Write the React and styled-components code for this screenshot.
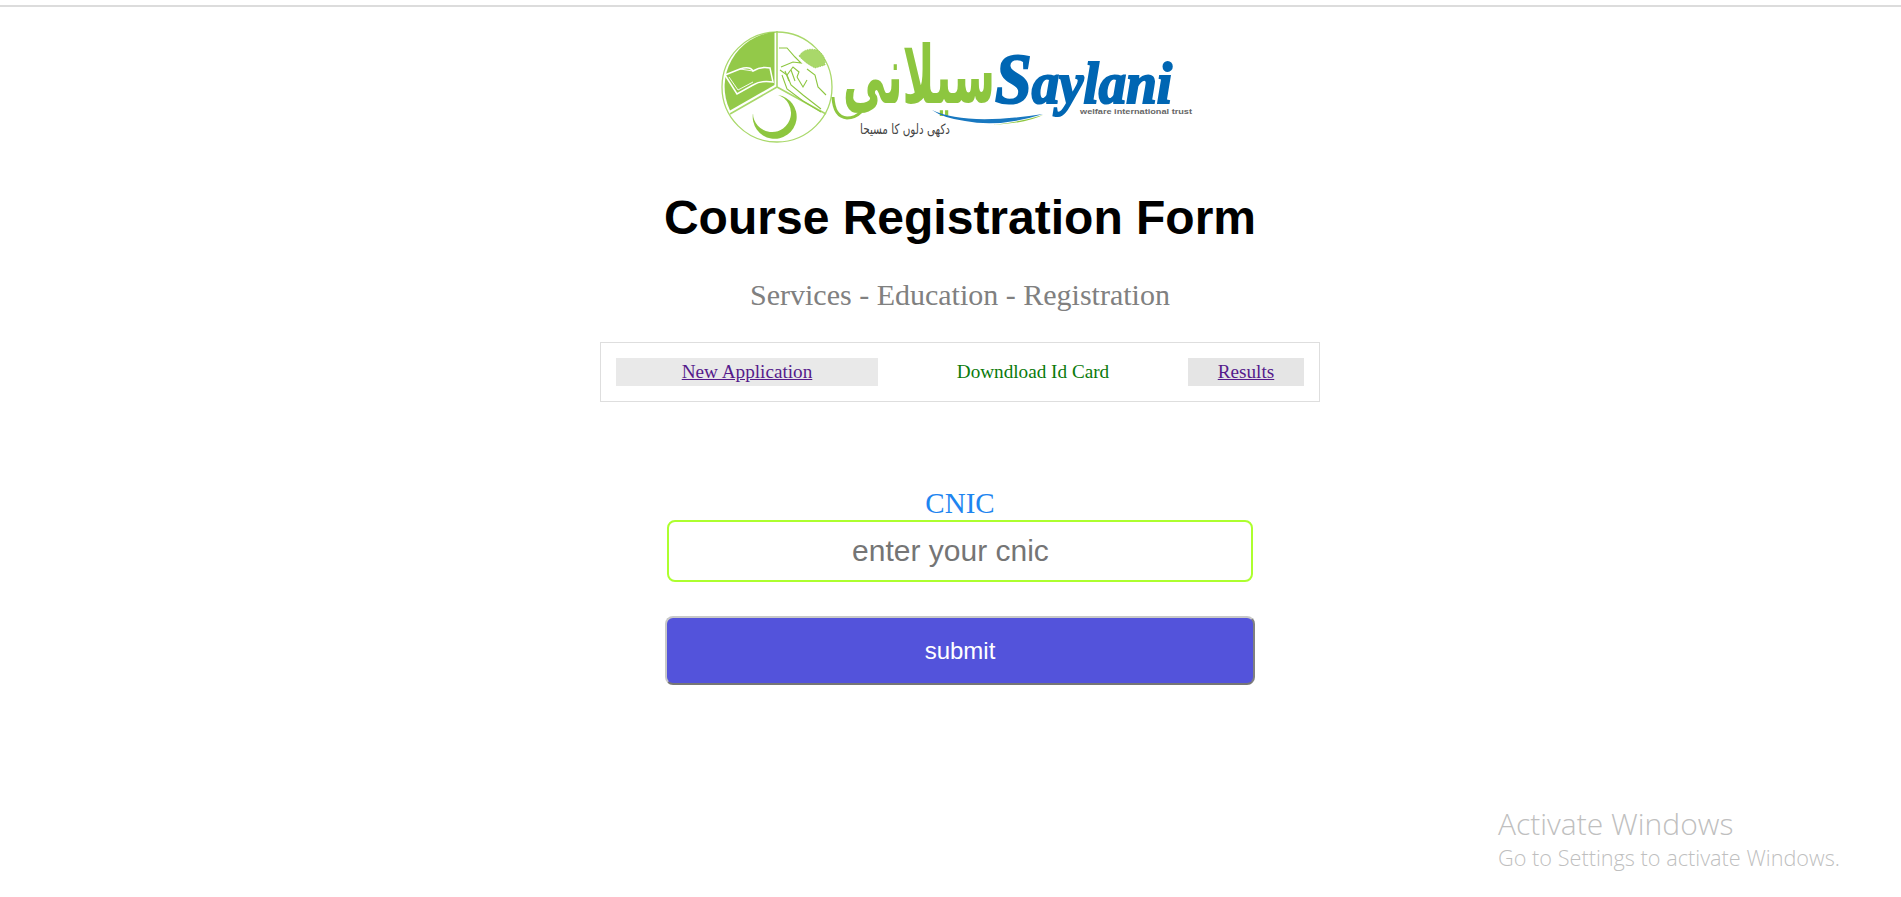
import React from "react";
import styled, { createGlobalStyle } from "styled-components";

const Global = createGlobalStyle`
  html, body { margin: 0; padding: 0; background: #fff; }
  body { font-family: "Liberation Serif", serif; overflow: hidden; }
`;

const Page = styled.div`
  position: relative;
  width: 1920px;
  height: 897px;
  padding-top: 5px;
  box-sizing: border-box;
  display: flex;
  flex-direction: column;
  align-items: center;
`;
const Rule = styled.div`
  width: 100%;
  height: 2px;
  background: #dcdcdc;
`;
const LogoSvg = styled.svg`
  display: block;
  width: 490px;
  height: 125px;
  margin-top: 18px;
`;
const Title = styled.h1`
  margin: 40px 0 0;
  font: bold 48px/56px "Liberation Sans", Arial, sans-serif;
  color: #000;
`;
const Subtitle = styled.h2`
  margin: 32px 0 0;
  font: normal 30px/34px "Liberation Serif", serif;
  color: #808080;
`;
const Nav = styled.nav`
  margin-top: 30px;
  width: 720px;
  height: 60px;
  box-sizing: border-box;
  border: 1px solid #dedede;
  padding: 0 15px;
  display: flex;
  align-items: center;
  justify-content: space-between;
  font-size: 19.2px;
`;
const NavLink = styled.a`
  display: block;
  width: ${(p) => p.$w}px;
  height: 28px;
  line-height: 28px;
  text-align: center;
  background: ${(p) => p.$bg};
  color: #551a8b;
  text-decoration: underline;
`;
const NavCurrent = styled.span`
  color: #0a7a0a;
  line-height: 28px;
`;
const Form = styled.form`
  margin-top: 84px;
  width: 591px;
  display: flex;
  flex-direction: column;
  align-items: center;
`;
const Label = styled.label`
  font-size: 29px;
  line-height: 34px;
  color: #1e85f0;
`;
const Input = styled.input`
  width: 586px;
  height: 62px;
  box-sizing: border-box;
  margin-right: 1px;
  padding: 0 18px 0 0;
  border: 2px solid #adff2f;
  border-radius: 8px;
  outline: none;
  text-align: center;
  font: 30px "Liberation Sans", Arial, sans-serif;
  background: #fff;
  &::placeholder { color: #757575; opacity: 1; }
`;
const Submit = styled.button`
  margin-top: 34px;
  width: 590px;
  height: 69px;
  box-sizing: border-box;
  border: 2px solid;
  border-color: #c8c8c8 #808080 #767676 #c8c8c8;
  border-radius: 8px;
  background: #5353db;
  color: #fff;
  font: 24px "Liberation Sans", Arial, sans-serif;
`;
const Watermark = styled.div`
  position: absolute;
  left: 1498px;
  top: 804px;
  color: #bfbfbf;
  font-family: "Open Sans", sans-serif;
  font-weight: 300;
`;
const WatermarkTitle = styled.div`
  font-size: 30px;
  line-height: 40px;
`;
const WatermarkText = styled.div`
  font-size: 21.7px;
  line-height: 28px;
`;

function Logo() {
  const g = "#8dc63f";
  const p = "#a9d86a";
  return (
    <LogoSvg viewBox="0 0 490 125" aria-label="Saylani logo">
      <circle cx="62" cy="62" r="55" fill="#fff" stroke={p} strokeWidth="1.3" />
      <path d="M59.5 7 A55 55 0 0 0 15 85.5 L59.5 60 Z" fill={g} opacity="0.95" />
      <path d="M62 6 V62 M62 62 L111 89 M62 62 L15 89" stroke={p} strokeWidth="1.6" fill="none" />
      <path d="M10 50 L25 44 Q35 41 38 46 Q46 41 55 43 L58 57 Q46 55 38 60 L22 69 Z" fill="none" stroke="#fff" strokeWidth="1.5" />
      <path d="M14 52 L23 65 L38 57 M25 44 L38 46" fill="none" stroke="#fff" strokeWidth="0.9" />
      <path d="M63 70 A22 22 0 1 1 38 88 A19 19 0 1 0 63 70 Z" fill={g} />
      <g fill="none" stroke={g} strokeWidth="1.1">
        <path d="M64 23 L72 23 L80 32 L86 38 L78 37 L66 42" />
        <path d="M65 45 L72 50 L78 42 L84 47 L82 52 M72 50 L76 60 L88 70 L106 84" />
        <path d="M67 50 L72 64 L88 76 L106 87" />
        <path d="M92 44 L100 50 L103 62 L111 70" />
        <path d="M82 52 L88 62 L92 55 M76 45 L80 56 M70 46 L74 56" />
      </g>
      <path d="M84 31 Q90 22 102 25 Q111 30 110 40 L100 43 Q90 38 84 31 Z" fill={p} stroke={g} strokeWidth="0.7" strokeDasharray="1.5 1" />
      <path d="M118 72 Q119 92 132 93 Q140 93 146 87" fill="none" stroke={g} strokeWidth="3" />
      <text x="280" y="78" fontFamily="DejaVu Sans, sans-serif" fontWeight="bold" fontSize="80" fill={g} textLength="152" lengthAdjust="spacingAndGlyphs" direction="rtl">سیلانی</text>
      <text x="280" y="78" fontFamily="Liberation Serif, serif" fontWeight="bold" fontStyle="italic" fontSize="60" fill="#0066b3" textLength="177" lengthAdjust="spacingAndGlyphs" stroke="#0066b3" strokeWidth="2.2"><tspan fontSize="72">S</tspan>aylani</text>
      <text x="365" y="89" fontFamily="Liberation Sans, sans-serif" fontWeight="bold" fontSize="8" fill="#666" textLength="112" lengthAdjust="spacingAndGlyphs">welfare international trust</text>
      <path d="M217 85 Q250 101 328 89 Q285 103 250 96 Q228 93 217 85 Z" fill="#1878c0" />
      <path d="M278 100 Q305 97 328 90 Q312 98 278 100 Z" fill={g} />
      <text x="235" y="109" fontFamily="DejaVu Sans, sans-serif" fontSize="14" fill="#444" textLength="90" lengthAdjust="spacingAndGlyphs" direction="rtl">دکھی دلوں کا مسیحا</text>
    </LogoSvg>
  );
}

export default function App() {
  return (
    <Page>
      <Global />
      <Rule />
      <Logo />
      <Title>Course Registration Form</Title>
      <Subtitle>Services - Education - Registration</Subtitle>
      <Nav>
        <NavLink href="#" $w={262} $bg="#e9e9e9">New Application</NavLink>
        <NavCurrent>Downdload Id Card</NavCurrent>
        <NavLink href="#" $w={116} $bg="#e5e5e5">Results</NavLink>
      </Nav>
      <Form onSubmit={(e) => e.preventDefault()}>
        <Label htmlFor="cnic">CNIC</Label>
        <Input id="cnic" placeholder="enter your cnic" />
        <Submit type="submit">submit</Submit>
      </Form>
      <Watermark>
        <WatermarkTitle>Activate Windows</WatermarkTitle>
        <WatermarkText>Go to Settings to activate Windows.</WatermarkText>
      </Watermark>
    </Page>
  );
}
